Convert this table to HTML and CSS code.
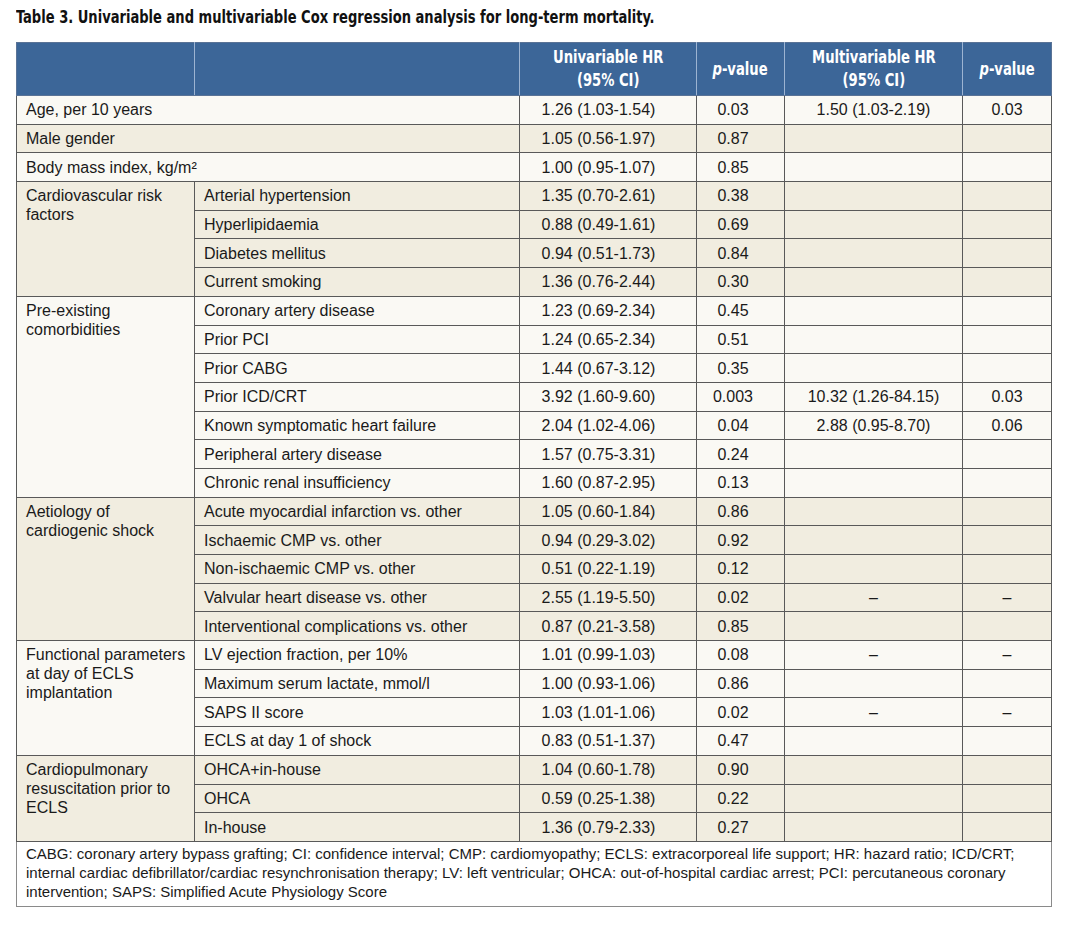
FILE: index.html
```html
<!DOCTYPE html>
<html>
<head>
<meta charset="utf-8">
<link rel="stylesheet" href="styles.css">
</head>
<body>
<div class="page">
  <h1 class="title"><span class="narrow">Table 3. Univariable and multivariable Cox regression analysis for long-term mortality.</span></h1>
  <table class="cox">
    <colgroup>
      <col class="c1"><col class="c2"><col class="c3"><col class="c4"><col class="c5"><col class="c6">
    </colgroup>
    <thead>
      <tr>
        <th></th>
        <th></th>
        <th><span class="narrow">Univariable HR<br>(95% CI)</span></th>
        <th><span class="narrow"><i>p</i>-value</span></th>
        <th><span class="narrow">Multivariable HR<br>(95% CI)</span></th>
        <th><span class="narrow"><i>p</i>-value</span></th>
      </tr>
    </thead>
    <tbody class="light">
      <tr><td colspan="2" class="lbl">Age, per 10 years</td><td class="hr">1.26 (1.03-1.54)</td><td class="p">0.03</td><td class="mhr">1.50 (1.03-2.19)</td><td class="mp">0.03</td></tr>
    </tbody>
    <tbody class="beige">
      <tr><td colspan="2" class="lbl">Male gender</td><td class="hr">1.05 (0.56-1.97)</td><td class="p">0.87</td><td class="mhr"></td><td class="mp"></td></tr>
    </tbody>
    <tbody class="light">
      <tr><td colspan="2" class="lbl">Body mass index, kg/m²</td><td class="hr">1.00 (0.95-1.07)</td><td class="p">0.85</td><td class="mhr"></td><td class="mp"></td></tr>
    </tbody>
    <tbody class="beige">
      <tr><td rowspan="4" class="grp">Cardiovascular risk factors</td><td class="sub">Arterial hypertension</td><td class="hr">1.35 (0.70-2.61)</td><td class="p">0.38</td><td class="mhr"></td><td class="mp"></td></tr>
      <tr><td class="sub">Hyperlipidaemia</td><td class="hr">0.88 (0.49-1.61)</td><td class="p">0.69</td><td class="mhr"></td><td class="mp"></td></tr>
      <tr><td class="sub">Diabetes mellitus</td><td class="hr">0.94 (0.51-1.73)</td><td class="p">0.84</td><td class="mhr"></td><td class="mp"></td></tr>
      <tr><td class="sub">Current smoking</td><td class="hr">1.36 (0.76-2.44)</td><td class="p">0.30</td><td class="mhr"></td><td class="mp"></td></tr>
    </tbody>
    <tbody class="light">
      <tr><td rowspan="7" class="grp">Pre-existing comorbidities</td><td class="sub">Coronary artery disease</td><td class="hr">1.23 (0.69-2.34)</td><td class="p">0.45</td><td class="mhr"></td><td class="mp"></td></tr>
      <tr><td class="sub">Prior PCI</td><td class="hr">1.24 (0.65-2.34)</td><td class="p">0.51</td><td class="mhr"></td><td class="mp"></td></tr>
      <tr><td class="sub">Prior CABG</td><td class="hr">1.44 (0.67-3.12)</td><td class="p">0.35</td><td class="mhr"></td><td class="mp"></td></tr>
      <tr><td class="sub">Prior ICD/CRT</td><td class="hr">3.92 (1.60-9.60)</td><td class="p">0.003</td><td class="mhr">10.32 (1.26-84.15)</td><td class="mp">0.03</td></tr>
      <tr><td class="sub">Known symptomatic heart failure</td><td class="hr">2.04 (1.02-4.06)</td><td class="p">0.04</td><td class="mhr">2.88 (0.95-8.70)</td><td class="mp">0.06</td></tr>
      <tr><td class="sub">Peripheral artery disease</td><td class="hr">1.57 (0.75-3.31)</td><td class="p">0.24</td><td class="mhr"></td><td class="mp"></td></tr>
      <tr><td class="sub">Chronic renal insufficiency</td><td class="hr">1.60 (0.87-2.95)</td><td class="p">0.13</td><td class="mhr"></td><td class="mp"></td></tr>
    </tbody>
    <tbody class="beige">
      <tr><td rowspan="5" class="grp">Aetiology of cardiogenic shock</td><td class="sub">Acute myocardial infarction vs. other</td><td class="hr">1.05 (0.60-1.84)</td><td class="p">0.86</td><td class="mhr"></td><td class="mp"></td></tr>
      <tr><td class="sub">Ischaemic CMP vs. other</td><td class="hr">0.94 (0.29-3.02)</td><td class="p">0.92</td><td class="mhr"></td><td class="mp"></td></tr>
      <tr><td class="sub">Non-ischaemic CMP vs. other</td><td class="hr">0.51 (0.22-1.19)</td><td class="p">0.12</td><td class="mhr"></td><td class="mp"></td></tr>
      <tr><td class="sub">Valvular heart disease vs. other</td><td class="hr">2.55 (1.19-5.50)</td><td class="p">0.02</td><td class="mhr">–</td><td class="mp">–</td></tr>
      <tr><td class="sub">Interventional complications vs. other</td><td class="hr">0.87 (0.21-3.58)</td><td class="p">0.85</td><td class="mhr"></td><td class="mp"></td></tr>
    </tbody>
    <tbody class="light">
      <tr><td rowspan="4" class="grp">Functional parameters at day of ECLS implantation</td><td class="sub">LV ejection fraction, per 10%</td><td class="hr">1.01 (0.99-1.03)</td><td class="p">0.08</td><td class="mhr">–</td><td class="mp">–</td></tr>
      <tr><td class="sub">Maximum serum lactate, mmol/l</td><td class="hr">1.00 (0.93-1.06)</td><td class="p">0.86</td><td class="mhr"></td><td class="mp"></td></tr>
      <tr><td class="sub">SAPS II score</td><td class="hr">1.03 (1.01-1.06)</td><td class="p">0.02</td><td class="mhr">–</td><td class="mp">–</td></tr>
      <tr><td class="sub">ECLS at day 1 of shock</td><td class="hr">0.83 (0.51-1.37)</td><td class="p">0.47</td><td class="mhr"></td><td class="mp"></td></tr>
    </tbody>
    <tbody class="beige">
      <tr><td rowspan="3" class="grp">Cardiopulmonary resuscitation prior to ECLS</td><td class="sub">OHCA+in-house</td><td class="hr">1.04 (0.60-1.78)</td><td class="p">0.90</td><td class="mhr"></td><td class="mp"></td></tr>
      <tr><td class="sub">OHCA</td><td class="hr">0.59 (0.25-1.38)</td><td class="p">0.22</td><td class="mhr"></td><td class="mp"></td></tr>
      <tr><td class="sub">In-house</td><td class="hr">1.36 (0.79-2.33)</td><td class="p">0.27</td><td class="mhr"></td><td class="mp"></td></tr>
    </tbody>
    <tfoot>
      <tr><td colspan="6" class="note">CABG: coronary artery bypass grafting; CI: confidence interval; CMP: cardiomyopathy; ECLS: extracorporeal life support; HR: hazard ratio; ICD/CRT; internal cardiac defibrillator/cardiac resynchronisation therapy; LV: left ventricular; OHCA: out-of-hospital cardiac arrest; PCI: percutaneous coronary intervention; SAPS: Simplified Acute Physiology Score</td></tr>
    </tfoot>
  </table>
</div>
</body>
</html>
```
FILE: styles.css
```css
html, body {
  margin: 0;
  padding: 0;
  background: #ffffff;
}
.page {
  padding: 7px 16px 0 16px;
  font-family: "Liberation Sans", Arial, sans-serif;
  color: #1a1a1a;
}
.title {
  margin: 0 0 15px 0;
  font-family: "DejaVu Sans Condensed", "Liberation Sans", sans-serif;
  font-weight: bold;
  font-size: 17px;
  line-height: 20px;
  color: #111;
  white-space: nowrap;
}
.title .narrow {
  display: inline-block;
  transform: scaleX(0.855);
  transform-origin: left center;
}
.cox {
  width: 1035px;
  table-layout: fixed;
  border-collapse: collapse;
  font-size: 16px;
}
.c1 { width: 178px; }
.c2 { width: 325px; }
.c3 { width: 177px; }
.c4 { width: 88px; }
.c5 { width: 178px; }
.c6 { width: 89px; }
.cox thead th {
  background: #3c6698;
  color: #ffffff;
  font-family: "DejaVu Sans Condensed", "Liberation Sans", sans-serif;
  font-weight: bold;
  font-size: 17px;
  line-height: 23px;
  height: 52px;
  padding: 0 2px;
  text-align: center;
  vertical-align: middle;
  border: 1px solid #5a7396;
  border-left-color: #9db4d2;
  border-right-color: #9db4d2;
  white-space: nowrap;
}
.cox thead th .narrow {
  display: inline-block;
  transform: scaleX(0.86);
  transform-origin: center center;
}
.cox thead th:first-child { border-left-color: #5a7396; }
.cox thead th:last-child { border-right-color: #5a7396; }
.cox tbody td {
  border: 1px solid #595959;
  height: 27.7px;
  padding: 0 9px;
  line-height: 19px;
  vertical-align: middle;
  white-space: nowrap;
}
.cox tbody.light td { background: #faf9f4; }
.cox tbody.beige td { background: #f1ede0; }
.cox td.grp {
  vertical-align: top;
  padding-top: 4px;
  padding-right: 2px;
  white-space: normal;
}
.cox td.hr { text-align: center; padding-right: 28px; }
.cox td.p { text-align: center; padding-right: 24px; }
.cox td.mhr, .cox td.mp { text-align: center; }
.cox tfoot td.note {
  border: 1px solid #8a8a8a;
  background: #ffffff;
  font-size: 15px;
  line-height: 19px;
  padding: 2px 9px 5px 9px;
}
```
